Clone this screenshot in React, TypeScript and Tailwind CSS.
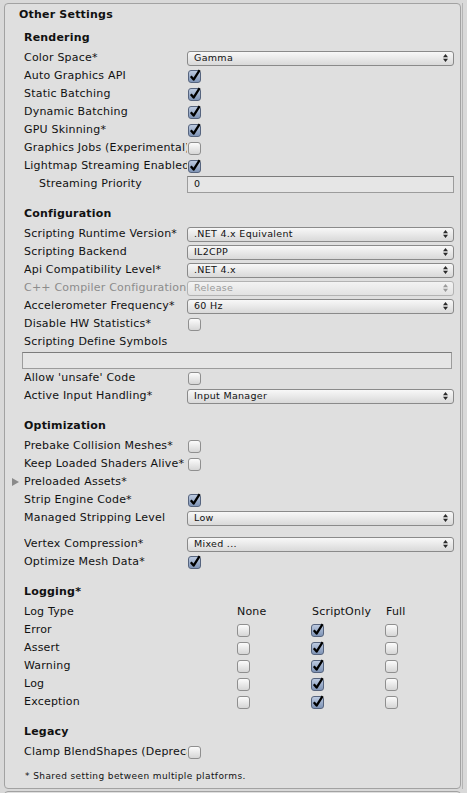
import type { ReactNode } from 'react';
import { clsx } from 'clsx';

const FONT = "font-['DejaVu_Sans',Verdana,sans-serif]";

const Arrows = ({ disabled }: { disabled?: boolean }) => (
  <svg width="5" height="8" viewBox="0 0 5 8" className="shrink-0">
    <path d="M0 3.2 L2.5 0 L5 3.2Z M0 4.8 L2.5 8 L5 4.8Z" fill={disabled ? '#9a9a9a' : '#2a2a2a'} />
  </svg>
);

const Check = ({ on }: { on?: boolean }) => (
  <span
    className={clsx(
      'relative ml-[1px] block h-[13px] w-[13px] rounded-[3px] border',
      on
        ? 'border-[#56647e] bg-linear-to-b from-[#bccae0] to-[#7f94b6]'
        : 'border-[#8f8f8f] bg-linear-to-b from-[#fcfcfc] to-[#d6d6d6]'
    )}
  >
    {on && (
      <svg className="absolute -top-[2px] left-[0px]" width="12" height="13" viewBox="0 0 12 13">
        <path d="M1.8 7.2 L4.6 10.6 L10.6 1.2" fill="none" stroke="#000" strokeWidth="2.3" strokeLinejoin="round" />
      </svg>
    )}
  </span>
);

const Popup = ({ value, disabled }: { value: string; disabled?: boolean }) => (
  <div
    className={clsx(
      'flex h-[15px] items-center justify-between rounded-[3px] border pl-[6px] pr-[5px] text-[9.5px] tracking-[0.3px]',
      disabled
        ? 'border-[#b3b3b3] bg-linear-to-b from-[#f3f3f3] to-[#e2e2e2] text-[#9a9a9a]'
        : 'border-[#8a8a8a] bg-linear-to-b from-[#f8f8f8] to-[#d9d9d9] text-[#111]'
    )}
  >
    <span className="leading-none">{value}</span>
    <Arrows disabled={disabled} />
  </div>
);

const Field = ({ value, className }: { value?: string; className?: string }) => (
  <div
    className={clsx(
      'flex h-[17px] items-center border border-[#9c9c9c] border-t-[#7c7c7c] bg-[#e6e6e6] pl-[6px] text-[9.5px] text-[#111]',
      className
    )}
  >
    {value}
  </div>
);

const Row = ({
  label,
  indent,
  disabled,
  className,
  children
}: {
  label: string;
  indent?: boolean;
  disabled?: boolean;
  className?: string;
  children?: ReactNode;
}) => (
  <div className={clsx('flex h-[18px] items-center', className)}>
    <div
      className={clsx(
        'w-[163px] shrink-0 overflow-hidden whitespace-nowrap',
        indent && 'pl-[15px]',
        disabled ? 'text-[#8c8c8c]' : 'text-[#111]'
      )}
    >
      {label}
    </div>
    <div className="min-w-0 flex-1">{children}</div>
  </div>
);

const Header = ({ title, className }: { title: string; className?: string }) => (
  <div className={clsx('flex h-[18px] items-center font-bold text-[#111]', className)}>{title}</div>
);

const LOG_ROWS = ['Error', 'Assert', 'Warning', 'Log', 'Exception'];

export default function App() {
  return (
    <div className={clsx('h-[793px] w-[467px] overflow-hidden bg-[#d9d9d9] pl-[4px] pt-[3px] text-[11px] tracking-[0.2px]', FONT)}>
      <div className="flex w-[457px]">
        <div className="w-[457px] shrink-0 rounded-[4px] border border-[#a2a2a2] bg-[#dfdfdf] pt-[2px]">
          <div className="flex h-[18px] items-center pl-[14px] font-bold text-[#111]">Other Settings</div>

          <div className="pl-[19px] pr-[6px]">
            <Header title="Rendering" className="mt-[5px]" />
            <div className="mt-[2px]">
              <Row label="Color Space*">
                <Popup value="Gamma" />
              </Row>
              <Row label="Auto Graphics API">
                <Check on />
              </Row>
              <Row label="Static Batching">
                <Check on />
              </Row>
              <Row label="Dynamic Batching">
                <Check on />
              </Row>
              <Row label="GPU Skinning*">
                <Check on />
              </Row>
              <Row label="Graphics Jobs (Experimental)">
                <Check />
              </Row>
              <Row label="Lightmap Streaming Enabled">
                <Check on />
              </Row>
              <Row label="Streaming Priority" indent>
                <Field value="0" />
              </Row>
            </div>

            <Header title="Configuration" className="mt-[12px]" />
            <div className="mt-[2px]">
              <Row label="Scripting Runtime Version*">
                <Popup value=".NET 4.x Equivalent" />
              </Row>
              <Row label="Scripting Backend">
                <Popup value="IL2CPP" />
              </Row>
              <Row label="Api Compatibility Level*">
                <Popup value=".NET 4.x" />
              </Row>
              <Row label="C++ Compiler Configuration" disabled>
                <Popup value="Release" disabled />
              </Row>
              <Row label="Accelerometer Frequency*">
                <Popup value="60 Hz" />
              </Row>
              <Row label="Disable HW Statistics*">
                <Check />
              </Row>
              <Row label="Scripting Define Symbols" />
              <div className="flex h-[18px] items-center">
                <Field className="-ml-[2px] w-full" />
              </div>
              <Row label="Allow 'unsafe' Code">
                <Check />
              </Row>
              <Row label="Active Input Handling*">
                <Popup value="Input Manager" />
              </Row>
            </div>

            <Header title="Optimization" className="mt-[12px]" />
            <div className="mt-[2px]">
              <Row label="Prebake Collision Meshes*">
                <Check />
              </Row>
              <Row label="Keep Loaded Shaders Alive*">
                <Check />
              </Row>
              <div className="relative flex h-[18px] items-center text-[#111]">
                <svg className="absolute -left-[12px] top-[5px]" width="7" height="8" viewBox="0 0 7 8">
                  <path d="M0 0 L7 4 L0 8Z" fill="#8a8a8a" />
                </svg>
                Preloaded Assets*
              </div>
              <Row label="Strip Engine Code*">
                <Check on />
              </Row>
              <Row label="Managed Stripping Level">
                <Popup value="Low" />
              </Row>
              <Row label="Vertex Compression*" className="mt-[8px]">
                <Popup value="Mixed ..." />
              </Row>
              <Row label="Optimize Mesh Data*">
                <Check on />
              </Row>
            </div>

            <Header title="Logging*" className="mt-[12px]" />
            <div className="mt-[2px] text-[#111]">
              <div className="flex h-[18px] items-center">
                <div className="w-[212px] shrink-0">Log Type</div>
                <div className="w-[74px] shrink-0 pl-[1px]">None</div>
                <div className="w-[74px] shrink-0 pl-[2px]">ScriptOnly</div>
                <div className="pl-[2px]">Full</div>
              </div>
              {LOG_ROWS.map((name) => (
                <div key={name} className="flex h-[18px] items-center">
                  <div className="w-[212px] shrink-0">{name}</div>
                  <div className="w-[74px] shrink-0">
                    <Check />
                  </div>
                  <div className="w-[74px] shrink-0">
                    <Check on />
                  </div>
                  <div>
                    <Check />
                  </div>
                </div>
              ))}
            </div>

            <Header title="Legacy" className="mt-[12px]" />
            <div className="mt-[2px]">
              <Row label="Clamp BlendShapes (Deprecated)*">
                <Check />
              </Row>
            </div>

            <div className="mt-[7px] flex h-[18px] items-center pl-[1px] text-[9px] tracking-[0.4px] text-[#111]">
              * Shared setting between multiple platforms.
            </div>
          </div>
        </div>
        <div className="ml-[1px] h-[786px] w-[1px] shrink-0 bg-[#b4b4b4]" />
      </div>
      <div className="mt-[2px] h-[10px] w-[457px] rounded-t-[4px] border border-[#a2a2a2] bg-[#dfdfdf]" />
    </div>
  );
}
